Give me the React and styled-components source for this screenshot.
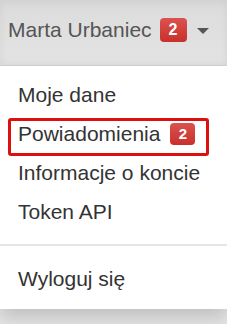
import React from "react";
import styled, { createGlobalStyle } from "styled-components";

const Global = createGlobalStyle`
  html, body { margin: 0; padding: 0; }
  body { background: #e4e4e4; font-family: "Liberation Sans", Arial, sans-serif; }
`;

const Frame = styled.div`
  position: relative;
  width: 227px;
  height: 324px;
  overflow: hidden;
  background: linear-gradient(to bottom, #e0e0e0, #e6e6e6);
`;

const Toggle = styled.div`
  display: flex;
  align-items: center;
  height: 66px;
  box-sizing: border-box;
  padding: 0 0 5px 8px;
  background: linear-gradient(to bottom, #dcdcdc 0%, #e3e3e3 100%);
  box-shadow: inset 0 3px 9px rgba(0, 0, 0, 0.06);
  border-bottom: 1px solid #d2d2d2;
  color: #555;
  font-size: 21px;
  line-height: 30px;
`;

const Badge = styled.span`
  display: inline-flex;
  align-items: center;
  justify-content: center;
  width: ${(p) => p.$w}px;
  height: ${(p) => p.$h}px;
  margin-left: ${(p) => p.$gap}px;
  border-radius: 4px;
  background: linear-gradient(to bottom, #d9534f 0%, #c9302c 100%);
  color: #fff;
  font-weight: bold;
  font-size: ${(p) => p.$fs}px;
  line-height: 1;
`;

const Caret = styled.span`
  width: 0;
  height: 0;
  margin-left: 10px;
  margin-top: 2px;
  border-top: 6px solid #555;
  border-left: 6px solid transparent;
  border-right: 6px solid transparent;
`;

const Menu = styled.ul`
  list-style: none;
  margin: 0;
  padding: 9px 0 10px;
  background: #fff;
  box-shadow: 0 9px 18px rgba(0, 0, 0, 0.17);
`;

const Item = styled.li`
  position: relative;
  display: flex;
  align-items: center;
  padding: 4.5px 0 4.5px 18px;
  font-size: 21px;
  line-height: 30px;
  color: #333;
`;

const Highlight = styled.span`
  position: absolute;
  left: 8px;
  top: 4px;
  width: 201px;
  height: 38px;
  box-sizing: border-box;
  border: 3px solid #dd1010;
  border-radius: 3px;
`;

const Divider = styled.li`
  height: 2px;
  margin: 12.5px 0 14px;
  background: #e5e5e5;
`;

export default function App() {
  return (
    <>
      <Global />
      <Frame>
        <Toggle>
          Marta Urbaniec
          <Badge $w={27} $h={24} $gap={8} $fs={16}>2</Badge>
          <Caret />
        </Toggle>
        <Menu>
          <Item>Moje dane</Item>
          <Item>
            Powiadomienia
            <Badge $w={25} $h={22} $gap={10} $fs={15}>2</Badge>
            <Highlight />
          </Item>
          <Item>Informacje o koncie</Item>
          <Item>Token API</Item>
          <Divider />
          <Item>Wyloguj się</Item>
        </Menu>
      </Frame>
    </>
  );
}
